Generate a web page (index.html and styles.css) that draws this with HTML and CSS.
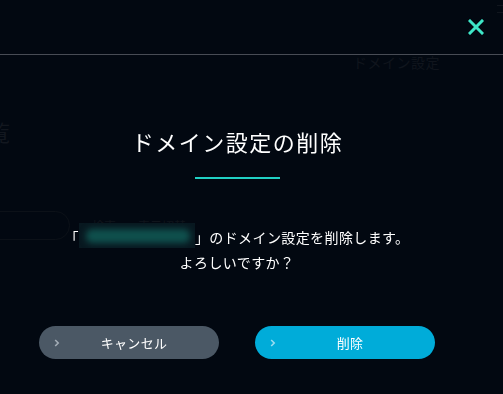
FILE: index.html
```html
<!DOCTYPE html>
<html lang="ja">
<head>
<meta charset="utf-8">
<title>ドメイン設定の削除</title>
<link rel="stylesheet" href="styles.css">
</head>
<body>
<div class="page">
  <header class="page-header">
    <span class="page-menu"></span>
  </header>
  <div class="page-crumb">ドメイン設定</div>
  <h1 class="page-title">ドメイン一覧</h1>
  <div class="page-search">
    <div class="page-input"></div>
    <span class="page-label">検索</span>
    <span class="page-label">表示切替</span>
  </div>
</div>

<div class="overlay">
  <button class="close" aria-label="閉じる">
    <svg width="16" height="16" viewBox="0 0 16 16"><path d="M2 2 L14 14 M14 2 L2 14" stroke="#3ee6c8" stroke-width="3" stroke-linecap="square" fill="none"/></svg>
  </button>
  <div class="dialog">
    <h2 class="dialog-title">ドメイン設定の削除</h2>
    <div class="dialog-rule"></div>
    <p class="dialog-msg">「<span class="masked"><span class="masked-blob"></span></span>」のドメイン設定を削除します。<br>よろしいですか？</p>
    <div class="dialog-actions">
      <button class="btn btn-cancel">
        <svg class="chev" width="6" height="8" viewBox="0 0 6 8"><path d="M1.2 1 L4.2 4 L1.2 7" stroke="currentColor" stroke-width="1.6" fill="none"/></svg>
        <span class="btn-label">キャンセル</span>
      </button>
      <button class="btn btn-delete">
        <svg class="chev" width="6" height="8" viewBox="0 0 6 8"><path d="M1.2 1 L4.2 4 L1.2 7" stroke="currentColor" stroke-width="1.6" fill="none"/></svg>
        <span class="btn-label">削除</span>
      </button>
    </div>
  </div>
</div>
</body>
</html>
```

FILE: styles.css
```css
* { box-sizing: border-box; }
html, body {
  margin: 0;
  padding: 0;
  width: 503px;
  height: 394px;
  overflow: hidden;
  background: #020811;
  font-family: "Noto Sans CJK JP", "Noto Sans", sans-serif;
}

/* underlying page (dimmed) */
.page {
  position: relative;
  height: 394px;
}
.page-header {
  height: 55px;
  border-bottom: 1px solid #484c55;
  display: flex;
  justify-content: flex-end;
}
.page-menu {
  width: 6px;
  height: 8px;
  margin-top: 5px;
  border-top: 1px solid #11161e;
  border-bottom: 1px solid #11161e;
}
.page-crumb {
  margin: -1px 0 0 353px;
  font-size: 14px;
  line-height: 16px;
  letter-spacing: 0.5px;
  color: #10151d;
}
.page-title {
  margin: 47px 0 0 -122px;
  font-size: 22px;
  line-height: 28px;
  font-weight: normal;
  color: #12171f;
}
.page-search {
  margin-top: 66px;
  display: flex;
  align-items: center;
  gap: 14px;
}
.page-input {
  width: 100px;
  height: 29px;
  margin-left: -30px;
  border: 1px solid #0c1118;
  border-radius: 15px;
}
.page-label {
  font-size: 12px;
  color: #10151c;
  margin-left: 8px;
}

/* modal */
.overlay {
  position: fixed;
  inset: 0;
  padding: 124px 0 0 39px;
}
.close {
  position: absolute;
  top: 19px;
  right: 19px;
  width: 16px;
  height: 16px;
  padding: 0;
  border: 0;
  background: none;
  display: block;
}
.close svg { display: block; }
.dialog {
  width: 396px;
  display: flex;
  flex-direction: column;
  align-items: center;
}
.dialog-title {
  margin: 0;
  font-size: 22px;
  line-height: 34px;
  font-weight: normal;
  letter-spacing: 1.5px;
  color: #ffffff;
  padding-left: 1px;
}
.dialog-rule {
  width: 85px;
  height: 2px;
  margin-top: 19px;
  background: #20d0c4;
}
.dialog-msg {
  margin: 46px 0 0;
  font-size: 14px;
  line-height: 25px;
  letter-spacing: 0.4px;
  color: #ffffff;
  text-align: center;
}
.masked {
  display: inline-block;
  vertical-align: top;
  width: 116px;
  height: 25px;
  margin-top: -2px;
  background: #081820;
  position: relative;
  overflow: hidden;
}
.masked-blob {
  position: absolute;
  left: 7px;
  top: 6px;
  width: 104px;
  height: 14px;
  border-radius: 6px;
  background: #0f504d;
  filter: blur(3px);
}
.dialog-actions {
  margin-top: 51px;
  display: flex;
  gap: 36px;
}
.btn {
  width: 180px;
  height: 33px;
  border: 0;
  border-radius: 17px;
  display: flex;
  align-items: center;
  padding: 0 11px 0 15px;
  font-family: inherit;
  font-size: 13px;
  font-weight: normal;
  color: #ffffff;
}
.btn-cancel { background: #4b5865; }
.btn-cancel .chev { color: #a3adb6; }
.btn-delete { background: #00acd9; }
.btn-delete .chev { color: #9adcf0; }
.chev { display: block; flex: none; }
.btn-label {
  flex: 1;
  text-align: center;
  letter-spacing: 0.3px;
}
```
